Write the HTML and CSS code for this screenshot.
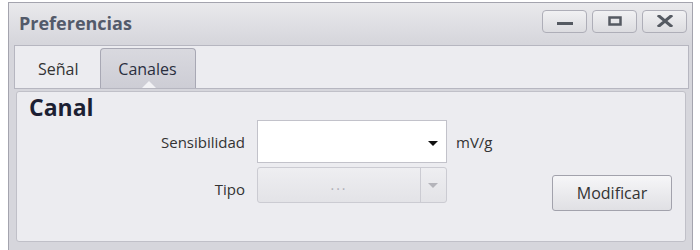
FILE: index.html
```html
<!DOCTYPE html>
<html lang="es">
<head>
  <meta charset="UTF-8" />
  <title>Preferencias</title>
  <link rel="stylesheet" href="styles.css">
</head>
<body>

  <div class="window">
    <div class="titlebar">
      <span class="title">Preferencias</span>
      <div class="controls">
        <button class="ctrl" title="Minimizar">
          <svg width="18" height="10" viewBox="0 0 18 10"><rect x="1" y="6" width="16" height="3" fill="#555a62"/></svg>
        </button>
        <button class="ctrl" title="Maximizar">
          <svg width="18" height="10" viewBox="0 0 18 10"><rect x="3.5" y="1.5" width="11" height="7" fill="none" stroke="#555a62" stroke-width="2.5"/></svg>
        </button>
        <button class="ctrl" title="Cerrar">
          <svg width="18" height="12" viewBox="0 0 18 12"><path d="M3 1 L15 11 M15 1 L3 11" stroke="#555a62" stroke-width="3" stroke-linecap="square"/></svg>
        </button>
      </div>
    </div>

    <div class="frame">
      <div class="tabs">
        <div class="tab">Señal</div>
        <div class="tab active">Canales<span class="notch"></span></div>
      </div>

      <div class="panel">
        <h2>Canal</h2>
        <div class="form">
          <label class="lbl">Sensibilidad</label>
          <div class="combo">
            <span class="arrow"></span>
          </div>
          <span class="unit">mV/g</span>
          <span></span>

          <label class="lbl">Tipo</label>
          <div class="combo disabled">
            <span class="value">...</span>
            <span class="drop"><span class="arrow"></span></span>
          </div>
          <span></span>
          <button class="btn">Modificar</button>
        </div>
      </div>
    </div>
  </div>

</body>
</html>
```

FILE: styles.css
```css
html, body {
  margin: 0;
  height: 250px;
  overflow: hidden;
  background: #fff;
}

body {
  font-family: "Open Sans", "Noto Sans", Arial, sans-serif;
  color: #333;
  padding: 2px 0 0 8px;
  box-sizing: border-box;
}

.window {
  width: 685px;
  height: 248px;
  box-sizing: border-box;
  border: 1px solid #a4a4ae;
  border-bottom: none;
  background: #d6d6dc;
}

.titlebar {
  height: 40px;
  display: flex;
  align-items: center;
  justify-content: space-between;
  padding: 0 5px 0 10px;
  background: linear-gradient(#e9e9ec, #d6d6dc);
}

.title {
  font-size: 18px;
  font-weight: bold;
  color: #535a6a;
  margin-top: -1px;
}

.controls {
  display: flex;
  gap: 5px;
  margin-top: -4px;
}

.ctrl {
  width: 45px;
  height: 23px;
  padding: 0;
  border: 1px solid #aeaeb8;
  border-radius: 4px;
  background: linear-gradient(#f1f1f3, #dcdce0);
  display: flex;
  align-items: center;
  justify-content: center;
}

.frame {
  padding: 2px 3px 0 5px;
}

.tabs {
  height: 44px;
  box-sizing: border-box;
  border: 1px solid #b6b6c0;
  background: #ececf0;
  display: flex;
  align-items: flex-end;
  padding-left: 8px;
  gap: 6px;
}

.tab {
  position: relative;
  height: 40px;
  box-sizing: border-box;
  padding: 0 14px;
  display: flex;
  align-items: center;
  font-size: 16px;
  color: #333;
  border: 1px solid transparent;
  border-bottom: none;
  border-radius: 4px 4px 0 0;
}

.tab.active {
  width: 96px;
  justify-content: center;
  padding: 0;
  background: linear-gradient(#d9d9df, #cdcdd5);
  border-color: #a8a8b4;
  color: #2a2e3e;
}

.notch {
  position: absolute;
  left: 41px;
  bottom: 0;
  width: 0;
  height: 0;
  border-left: 7px solid transparent;
  border-right: 7px solid transparent;
  border-bottom: 7px solid #f2f2f5;
}

.panel {
  margin: 2px 3px 0 2px;
  height: 151px;
  box-sizing: border-box;
  border: 1px solid #c0c0c8;
  border-radius: 3px;
  background: #ececf0;
  padding: 2px 0 0 12px;
}

h2 {
  margin: 0;
  font-size: 23px;
  line-height: 26px;
  font-weight: bold;
  color: #1c1f33;
}

.form {
  display: grid;
  grid-template-columns: 216px 190px 81px 120px;
  column-gap: 12px;
  row-gap: 4px;
}

.form .unit {
  margin-left: -3px;
}

.lbl {
  justify-self: end;
  align-self: center;
  font-size: 15px;
  color: #333;
}

.combo {
  position: relative;
  height: 43px;
  box-sizing: border-box;
  border: 1px solid #c2c2ca;
  background: #fff;
}

.combo .arrow {
  position: absolute;
  right: 8px;
  top: 20px;
  width: 0;
  height: 0;
  border-left: 5px solid transparent;
  border-right: 5px solid transparent;
  border-top: 5px solid #111;
}

.combo.disabled {
  height: 36px;
  display: flex;
  border-color: #cbcbd2;
  border-radius: 3px;
  background: linear-gradient(#eeeef1, #e3e3e7);
}

.combo.disabled .value {
  flex: 1;
  text-align: center;
  line-height: 34px;
  font-size: 14px;
  color: #aeaeb6;
  letter-spacing: 2px;
}

.combo.disabled .drop {
  position: relative;
  width: 25px;
  border-left: 1px solid #cbcbd2;
}

.combo.disabled .arrow {
  right: 8px;
  top: 15px;
  border-top-color: #b4b4ba;
}

.unit {
  align-self: center;
  font-size: 15px;
  color: #333;
}

.btn {
  align-self: start;
  margin-top: 8px;
  height: 36px;
  font-family: inherit;
  font-size: 16px;
  color: #333;
  border: 1px solid #a2a2ac;
  border-radius: 3px;
  background: linear-gradient(#f6f6f8, #e0e0e4);
}
```
